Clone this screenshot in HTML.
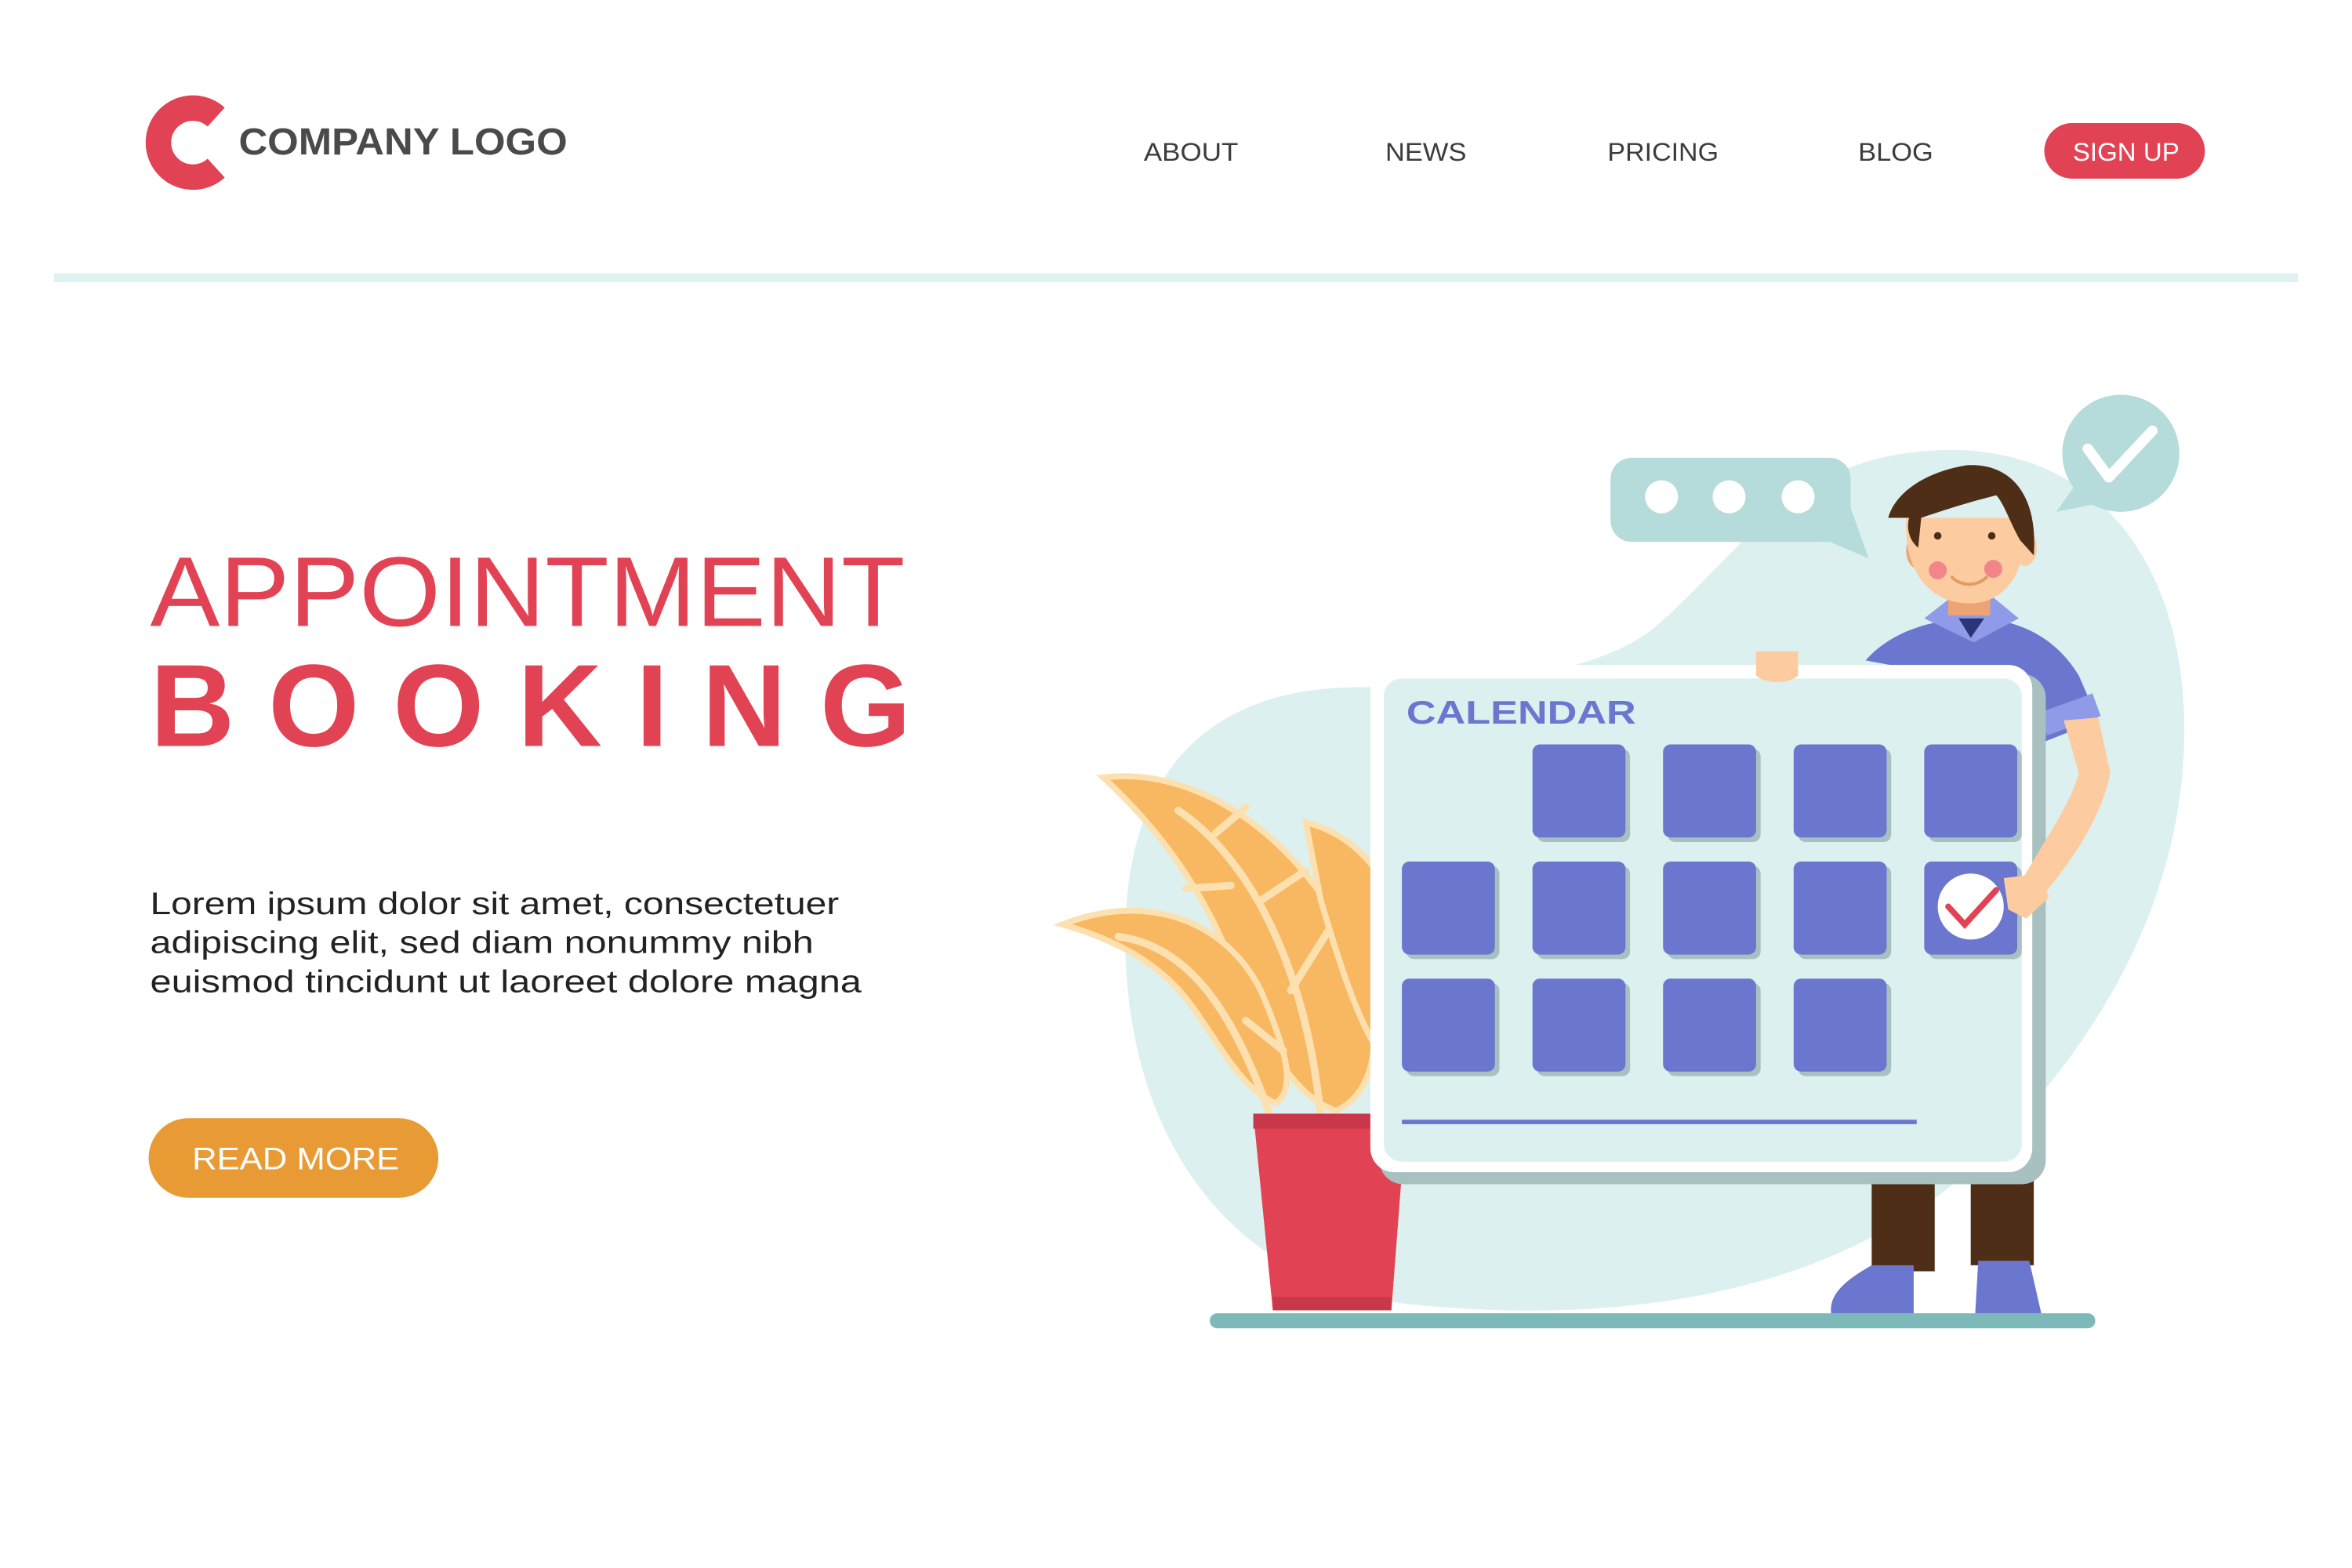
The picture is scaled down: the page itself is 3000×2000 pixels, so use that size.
<!DOCTYPE html>
<html><head><meta charset="utf-8"><style>
html,body{margin:0;padding:0;background:#fff;}
svg{display:block;}
text{font-family:"Liberation Sans",sans-serif;}
</style></head><body>
<svg width="3000" height="2000" viewBox="0 0 1567 1044.7" xmlns="http://www.w3.org/2000/svg">
<rect width="1570" height="1050" fill="#fff"/>
<!-- logo -->
<path d="M144 78 A23 23 0 1 0 144 112" fill="none" stroke="#e24354" stroke-width="17"/>
<text x="159" y="103" font-size="25" font-weight="bold" fill="#4a4a4a" textLength="219" lengthAdjust="spacingAndGlyphs">COMPANY LOGO</text>
<!-- nav -->
<g font-size="17" fill="#3c3c3c">
<text x="762" y="107" textLength="63" lengthAdjust="spacingAndGlyphs">ABOUT</text>
<text x="923" y="107" textLength="54" lengthAdjust="spacingAndGlyphs">NEWS</text>
<text x="1071" y="107" textLength="74" lengthAdjust="spacingAndGlyphs">PRICING</text>
<text x="1238" y="107" textLength="50" lengthAdjust="spacingAndGlyphs">BLOG</text>
</g>
<rect x="1362" y="82" width="107" height="37" rx="18.5" fill="#e24354"/>
<text x="1381" y="107" font-size="17" fill="#fff" textLength="71" lengthAdjust="spacingAndGlyphs">SIGN UP</text>
<rect x="36" y="182" width="1495" height="6" fill="#dff1f1"/>
<!-- hero text -->
<text x="100" y="417" font-size="66" fill="#e24354" textLength="503" lengthAdjust="spacingAndGlyphs">APPOINTMENT</text>
<text x="100" y="497" font-size="78" font-weight="bold" fill="#e24354" textLength="507" lengthAdjust="spacing">BOOKING</text>
<g font-size="21" fill="#222">
<text x="100" y="609" textLength="459" lengthAdjust="spacingAndGlyphs">Lorem ipsum dolor sit amet, consectetuer</text>
<text x="100" y="635" textLength="442" lengthAdjust="spacingAndGlyphs">adipiscing elit, sed diam nonummy nibh</text>
<text x="100" y="661" textLength="474" lengthAdjust="spacingAndGlyphs">euismod tincidunt ut laoreet dolore magna</text>
</g>
<rect x="99" y="745" width="193" height="53" rx="26.5" fill="#e89a35"/>
<text x="128" y="779" font-size="21" fill="#fff" textLength="138" lengthAdjust="spacingAndGlyphs">READ MORE</text>
<!-- blob -->
<path d="M1290 300 C1400 295 1460 380 1455 500 C1450 620 1380 720 1300 790 C1200 870 1060 880 950 870 C820 860 755 760 750 640 C745 520 800 460 900 458 C990 456 1060 450 1100 420 C1160 370 1190 305 1290 300 Z" fill="#dcf0f0"/>
<!-- speech bubble -->
<rect x="1073" y="305" width="160" height="56" rx="14" fill="#b5dbda"/>
<path d="M1205 355 L1245 372 L1230 330 Z" fill="#b5dbda"/>
<circle cx="1107" cy="331" r="11" fill="#fff"/><circle cx="1152" cy="331" r="11" fill="#fff"/><circle cx="1198" cy="331" r="11" fill="#fff"/>
<!-- check bubble -->
<circle cx="1413" cy="302" r="39" fill="#b5dbda"/>
<path d="M1385 320 L1370 341 L1400 335 Z" fill="#b5dbda"/>
<path d="M1391 299 L1405 318 L1434 287" fill="none" stroke="#fff" stroke-width="7" stroke-linecap="round" stroke-linejoin="round"/>
<!-- floor -->
<rect x="806" y="875" width="590" height="10" rx="5" fill="#7cb9b8"/>
<!-- plant leaves -->
<g fill="#f8b862" stroke="#fde0b0" stroke-width="4">
<path d="M735 518 C800 510 870 560 905 640 C925 690 915 730 890 740 C860 730 840 690 820 640 C800 590 770 550 735 518 Z"/>
<path d="M870 548 C900 555 925 580 935 620 L935 720 C910 700 895 650 880 600 Z"/>
<path d="M708 616 C760 595 815 610 840 660 C855 695 865 725 850 735 C825 725 810 690 790 665 C770 640 740 625 708 616 Z"/>
</g>
<g fill="none" stroke="#fde0b0" stroke-width="5" stroke-linecap="round">
<path d="M785 540 C830 570 870 640 880 745"/><path d="M745 624 C790 630 820 670 845 740"/>
<path d="M810 555 L830 538 M840 600 L870 580 M820 590 L790 592 M860 660 L885 620 M855 700 L830 680"/>
</g>
<!-- pot -->
<path d="M835 742 L937 742 L927 873 L848 873 Z" fill="#e24354"/>
<rect x="835" y="742" width="102" height="10" fill="#c8384a"/>
<rect x="848" y="864" width="79" height="9" fill="#c8384a"/>
<!-- man body behind -->
<path d="M1243 440 C1260 420 1290 412 1315 412 C1345 412 1370 425 1385 450 L1398 480 L1360 495 L1350 460 Z" fill="#6b77cf"/>
<rect x="1360" y="468" width="38" height="16" fill="#8f9ae8" transform="rotate(-20 1379 476)"/>
<path d="M1282 412 L1300 398 L1328 398 L1345 412 L1315 428 Z" fill="#8f9ae8"/>
<path d="M1305 412 L1313 425 L1322 412 Z" fill="#2b3478"/>
<rect x="1247" y="785" width="42" height="62" fill="#4f2e17"/><rect x="1313" y="785" width="42" height="58" fill="#4f2e17"/>
<path d="M1247 843 L1275 843 L1275 875 L1220 875 C1218 860 1235 850 1247 843 Z" fill="#6b77cf"/>
<path d="M1318 840 L1352 840 L1360 875 L1316 875 Z" fill="#6b77cf"/>
<!-- head -->
<rect x="1298" y="385" width="28" height="25" fill="#eda474"/>
<ellipse cx="1278" cy="367" rx="8" ry="12" fill="#eda474"/>
<ellipse cx="1349" cy="365" rx="8" ry="12" fill="#fccca0"/>
<path d="M1270 345 C1268 380 1285 402 1312 402 C1340 402 1352 375 1348 345 Z" fill="#fccca0"/>
<path d="M1258 345 C1262 330 1280 315 1310 310 C1340 308 1358 330 1355 370 L1346 360 C1340 350 1335 335 1330 330 C1310 335 1295 340 1280 345 L1278 365 C1272 360 1270 352 1272 345 Z" fill="#4f2e17"/>
<circle cx="1291" cy="357" r="2.5" fill="#4f2e17"/><circle cx="1327" cy="357" r="2.5" fill="#4f2e17"/>
<circle cx="1291" cy="380" r="6" fill="#f3858a"/><circle cx="1328" cy="379" r="6" fill="#f3858a"/>
<path d="M1300 384 C1306 391 1318 391 1324 384" fill="none" stroke="#e29a60" stroke-width="2"/>
<!-- calendar -->
<rect x="919" y="449" width="444" height="340" rx="16" fill="#a8c1c0"/>
<rect x="913" y="443" width="441" height="338" rx="16" fill="#fff"/>
<rect x="922" y="452" width="425" height="322" rx="12" fill="#dcf0f0"/>
<text x="937" y="482" font-size="22" font-weight="bold" fill="#6b77cf" textLength="153" lengthAdjust="spacingAndGlyphs">CALENDAR</text>
<g fill="#a8c1c0">
<rect x="1024" y="499" width="62" height="62" rx="5"/><rect x="1111" y="499" width="62" height="62" rx="5"/><rect x="1198" y="499" width="62" height="62" rx="5"/><rect x="1285" y="499" width="62" height="62" rx="5"/>
<rect x="937" y="577" width="62" height="62" rx="5"/><rect x="1024" y="577" width="62" height="62" rx="5"/><rect x="1111" y="577" width="62" height="62" rx="5"/><rect x="1198" y="577" width="62" height="62" rx="5"/><rect x="1285" y="577" width="62" height="62" rx="5"/>
<rect x="937" y="655" width="62" height="62" rx="5"/><rect x="1024" y="655" width="62" height="62" rx="5"/><rect x="1111" y="655" width="62" height="62" rx="5"/><rect x="1198" y="655" width="62" height="62" rx="5"/>
</g>
<g fill="#6b77cf">
<rect x="1021" y="496" width="62" height="62" rx="5"/><rect x="1108" y="496" width="62" height="62" rx="5"/><rect x="1195" y="496" width="62" height="62" rx="5"/><rect x="1282" y="496" width="62" height="62" rx="5"/>
<rect x="934" y="574" width="62" height="62" rx="5"/><rect x="1021" y="574" width="62" height="62" rx="5"/><rect x="1108" y="574" width="62" height="62" rx="5"/><rect x="1195" y="574" width="62" height="62" rx="5"/><rect x="1282" y="574" width="62" height="62" rx="5"/>
<rect x="934" y="652" width="62" height="62" rx="5"/><rect x="1021" y="652" width="62" height="62" rx="5"/><rect x="1108" y="652" width="62" height="62" rx="5"/><rect x="1195" y="652" width="62" height="62" rx="5"/>
</g>
<rect x="934" y="746" width="343" height="3" fill="#6b77cf"/>
<circle cx="1313" cy="604" r="22" fill="#fff"/>
<path d="M1298 604 L1309 616 L1330 593" fill="none" stroke="#e24354" stroke-width="4" stroke-linecap="round"/>
<!-- arm + hands -->
<path d="M1375 480 L1398 478 L1406 515 C1400 545 1380 575 1358 600 L1345 590 C1362 560 1380 535 1385 515 Z" fill="#fccca0"/>
<path d="M1335 585 L1360 582 L1365 598 L1350 612 L1338 606 Z" fill="#fccca0"/>
<path d="M1170 434 L1198 434 L1198 450 C1192 456 1176 456 1170 450 Z" fill="#fccca0"/>
</svg>
</body></html>
